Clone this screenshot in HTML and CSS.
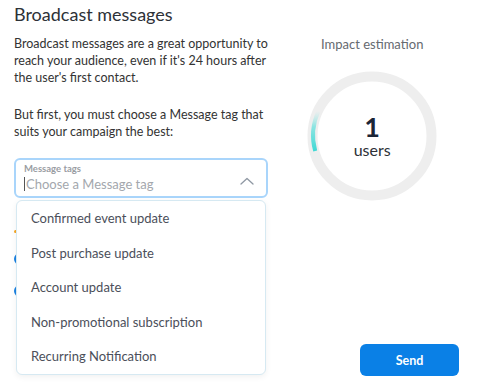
FILE: index.html
```html
<!DOCTYPE html>
<html lang="en">
<head>
  <meta charset="UTF-8">
  <meta name="viewport" content="width=device-width, initial-scale=1.0">
  <title>Broadcast messages</title>
  <link rel="stylesheet" href="styles.css">
</head>
<body>
  <div class="broadcast">
    <div class="left-col">
      <h2>Broadcast messages</h2>
      <p class="intro">Broadcast messages are a great opportunity to reach your audience, even if it's 24 hours after the user's first contact.</p>
      <p class="intro">But first, you must choose a Message tag that suits your campaign the best:</p>

      <div class="tag-select">
        <div class="select-box">
          <span class="select-label">Message tags</span>
          <div class="select-row">
            <span class="caret"></span>
            <span class="placeholder">Choose a Message tag</span>
            <svg class="chevron" width="14" height="8" viewBox="0 0 14 8">
              <path d="M1 7 L7 1.5 L13 7" fill="none" stroke="#8f98a3" stroke-width="1.3" stroke-linecap="round" stroke-linejoin="round"/>
            </svg>
          </div>
        </div>

        <ul class="tag-menu">
          <li>Confirmed event update</li>
          <li>Post purchase update</li>
          <li>Account update</li>
          <li>Non-promotional subscription</li>
          <li>Recurring Notification</li>
        </ul>
      </div>

      <!-- covered by the open menu -->
      <div class="warn-mark"></div>
      <div class="radio on"></div>
      <div class="radio"></div>
    </div>

    <div class="right-col">
      <div class="impact-title">Impact estimation</div>
      <div class="impact">
        <svg class="ring" width="130" height="130" viewBox="0 0 130 130">
          <defs>
            <linearGradient id="arc" x1="0" y1="1" x2="0" y2="0">
              <stop offset="0" stop-color="#3fd8d4"/>
              <stop offset="0.6" stop-color="#5fe0dc" stop-opacity="0.7"/>
              <stop offset="1" stop-color="#8ce8e4" stop-opacity="0"/>
            </linearGradient>
          </defs>
          <circle cx="65" cy="65" r="59.5" fill="none" stroke="#eeeeee" stroke-width="10"/>
          <path d="M8.2 80 A58 58 0 0 1 11.5 40" fill="none" stroke="url(#arc)" stroke-width="4"/>
        </svg>
        <div class="impact-count">
          <span class="num">1</span>
          <span class="unit">users</span>
        </div>
      </div>
      <button class="send-btn">Send</button>
    </div>
  </div>
</body>
</html>
```

FILE: styles.css
```css
body {
  margin: 0;
  padding: 0;
  background: #fff;
  font-family: 'Lato', 'Noto Sans', sans-serif;
  color: #333;
}

.broadcast {
  display: flex;
  gap: 17px;
  min-height: 100vh;
  box-sizing: border-box;
  padding: 0 40px 16px 14px;
}

.left-col {
  width: 255px;
}

h2 {
  margin: 3px 0 10px;
  font-size: 18px;
  font-weight: 400;
  color: #2d3137;
}

.intro {
  margin: 0 0 20px;
  font-size: 12.5px;
  line-height: 17px;
  color: #333;
}

.intro + .intro {
  margin-bottom: 18px;
}

/* Select */
.tag-select {
  position: relative;
}

.select-box {
  border: 2.5px solid #a9d5fb;
  border-radius: 6px;
  padding: 2px 10px 3px 8px;
  height: 31px;
}

.select-label {
  display: block;
  font-size: 9.5px;
  font-weight: 700;
  color: #9a9da3;
  line-height: 13px;
}

.select-row {
  display: flex;
  align-items: center;
  height: 17px;
}

.caret {
  width: 1px;
  height: 14px;
  background: #555;
  margin-right: 1px;
}

.placeholder {
  flex: 1;
  font-size: 13px;
  color: #a3a7ad;
}

.chevron {
  margin-right: 2px;
  margin-top: -6px;
}

.tag-menu {
  position: absolute;
  top: calc(100% + 2px);
  left: 2px;
  right: 2px;
  margin: 0;
  padding: 0;
  list-style: none;
  background: #fff;
  border: 1px solid #d6e9f2;
  border-radius: 6px;
  box-shadow: 0 2px 6px rgba(0, 0, 0, 0.06);
  z-index: 2;
}

.tag-menu li {
  padding: 8px 14px;
  line-height: 18.5px;
  font-size: 13px;
  color: #4b4f5a;
  cursor: pointer;
}

/* Under the menu, only edges show */
.warn-mark {
  width: 8px;
  height: 3px;
  margin-top: 32px;
  background: #f5a623;
  border-radius: 2px;
}

.radio {
  width: 12px;
  height: 12px;
  margin-top: 20px;
  border-radius: 50%;
  border: 2px solid #1a82e2;
  box-sizing: border-box;
}

/* Right side */
.right-col {
  width: 174px;
  display: flex;
  flex-direction: column;
  align-items: center;
}

.impact-title {
  margin-top: 36px;
  font-size: 13px;
  color: #666a70;
}

.impact {
  position: relative;
  width: 130px;
  height: 130px;
  margin-top: 19px;
}

.impact-count {
  position: absolute;
  top: 0;
  left: 0;
  right: 0;
  bottom: 0;
  display: flex;
  flex-direction: column;
  align-items: center;
  justify-content: center;
}

.num {
  font-size: 27px;
  line-height: 28px;
  font-weight: 700;
  color: #1b2536;
}

.unit {
  font-size: 16px;
  line-height: 18px;
  color: #2d3137;
}

.send-btn {
  margin-top: auto;
  align-self: flex-end;
  width: 99px;
  height: 32px;
  border: none;
  border-radius: 6px;
  background: #0a80e6;
  color: #fff;
  font-family: inherit;
  font-size: 12.5px;
  font-weight: 700;
  cursor: pointer;
}
```
